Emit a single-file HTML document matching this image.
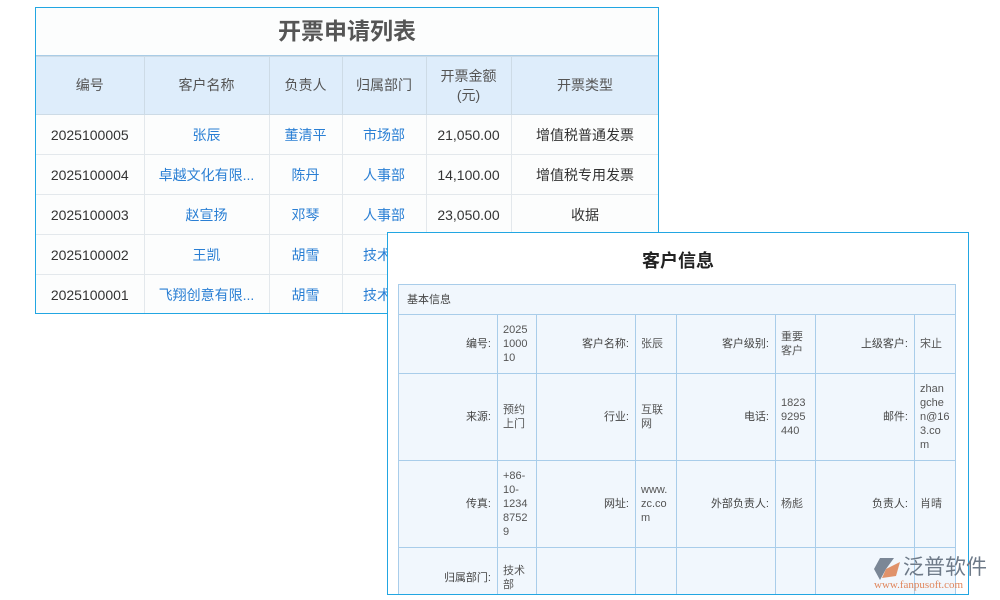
<!DOCTYPE html>
<html><head><meta charset="utf-8"><style>
*{margin:0;padding:0;box-sizing:border-box}
body{width:1000px;height:600px;background:#fff;position:relative;overflow:hidden;font-family:"Liberation Sans","Noto Sans CJK SC",sans-serif}
.p1{position:absolute;left:35px;top:7px;width:624px;height:307px;border:1px solid #22a6e2;background:#fcfdfd;overflow:hidden}
.p1 .t{height:48px;text-align:center;line-height:46px;font-size:23px;font-weight:bold;color:#555;border-bottom:1px solid #a9cce6}
table{border-collapse:collapse;table-layout:fixed}
.p1 table td{border:1px solid #e3e8ec;text-align:center;font-size:14px;color:#333;height:40px;white-space:nowrap;overflow:hidden}
.p1 table tr.h td{background:#deedfb;color:#555;height:58px;border-color:#cddbe6;line-height:19px}
.p1 table tr td:first-child{border-left:none}
.p1 table td.b{color:#2a7fd4}
.p2{position:absolute;left:387px;top:232px;width:582px;height:363px;border:1px solid #22a6e2;background:#fff;overflow:hidden}
.p2 .t{position:absolute;left:0;width:100%;top:14px;text-align:center;font-size:18px;font-weight:bold;color:#222}
.p2 table{position:absolute;left:10px;top:51px;width:557px}
.p2 td{border:1px solid #a9cdea;background:#f1f7fd;font-size:11px;color:#444;line-height:14px;vertical-align:middle;padding:0 5px;white-space:nowrap}
.p2 td.l{text-align:right;padding-right:6px}
.p2 td.v{color:#555}
.logo{position:absolute;left:870px;top:552px;width:125px;height:40px;white-space:nowrap}
</style></head><body>
<div class="p1"><div class="t">开票申请列表</div>
<table style="width:623px">
<colgroup><col style="width:108px"><col style="width:125px"><col style="width:73px"><col style="width:84px"><col style="width:85px"><col style="width:148px"></colgroup>
<tr class="h"><td>编号</td><td>客户名称</td><td>负责人</td><td>归属部门</td><td>开票金额<br>(元)</td><td>开票类型</td></tr>
<tr><td>2025100005</td><td class="b">张辰</td><td class="b">董清平</td><td class="b">市场部</td><td>21,050.00</td><td>增值税普通发票</td></tr>
<tr><td>2025100004</td><td class="b">卓越文化有限...</td><td class="b">陈丹</td><td class="b">人事部</td><td>14,100.00</td><td>增值税专用发票</td></tr>
<tr><td>2025100003</td><td class="b">赵宣扬</td><td class="b">邓琴</td><td class="b">人事部</td><td>23,050.00</td><td>收据</td></tr>
<tr><td>2025100002</td><td class="b">王凯</td><td class="b">胡雪</td><td class="b">技术部</td><td></td><td></td></tr>
<tr><td>2025100001</td><td class="b">飞翔创意有限...</td><td class="b">胡雪</td><td class="b">技术部</td><td></td><td></td></tr>
</table></div>
<div class="p2"><div class="t">客户信息</div>
<table>
<colgroup><col style="width:99px"><col style="width:39px"><col style="width:99px"><col style="width:41px"><col style="width:99px"><col style="width:40px"><col style="width:99px"><col style="width:41px"></colgroup>
<tr><td colspan="8" style="height:30px;padding-left:8px">基本信息</td></tr>
<tr style="height:59px"><td class="l">编号:</td><td class="v">2025<br>1000<br>10</td><td class="l">客户名称:</td><td class="v">张辰</td><td class="l">客户级别:</td><td class="v">重要<br>客户</td><td class="l">上级客户:</td><td class="v">宋止</td></tr>
<tr style="height:87px"><td class="l">来源:</td><td class="v">预约<br>上门</td><td class="l">行业:</td><td class="v">互联<br>网</td><td class="l">电话:</td><td class="v">1823<br>9295<br>440</td><td class="l">邮件:</td><td class="v">zhan<br>gche<br>n@16<br>3.co<br>m</td></tr>
<tr style="height:87px"><td class="l">传真:</td><td class="v">+86-<br>10-<br>1234<br>8752<br>9</td><td class="l">网址:</td><td class="v">www.<br>zc.co<br>m</td><td class="l">外部负责人:</td><td class="v">杨彪</td><td class="l">负责人:</td><td class="v">肖晴</td></tr>
<tr style="height:60px"><td class="l">归属部门:</td><td class="v">技术<br>部</td><td></td><td></td><td></td><td></td><td></td><td></td></tr>
</table></div>
<div class="logo">
<svg width="34" height="26" viewBox="0 0 34 26" style="position:absolute;left:2px;top:4px"><path d="M8 2 L22 2 L14 13 L8 24 L2 13 Z" fill="#7b8796"/><path d="M14 13 L28 6 L24 20 L10 22 Z" fill="#e0926a"/></svg>
<div style="position:absolute;left:33px;top:0;font-size:21px;color:#6e7a88;font-family:'Noto Sans CJK SC',sans-serif;line-height:28px">泛普软件</div>
<div style="position:absolute;left:4px;top:27px;font-size:11px;color:#e0865c;font-family:'Liberation Serif',serif">www.fanpusoft.com</div>
</div>
</body></html>
